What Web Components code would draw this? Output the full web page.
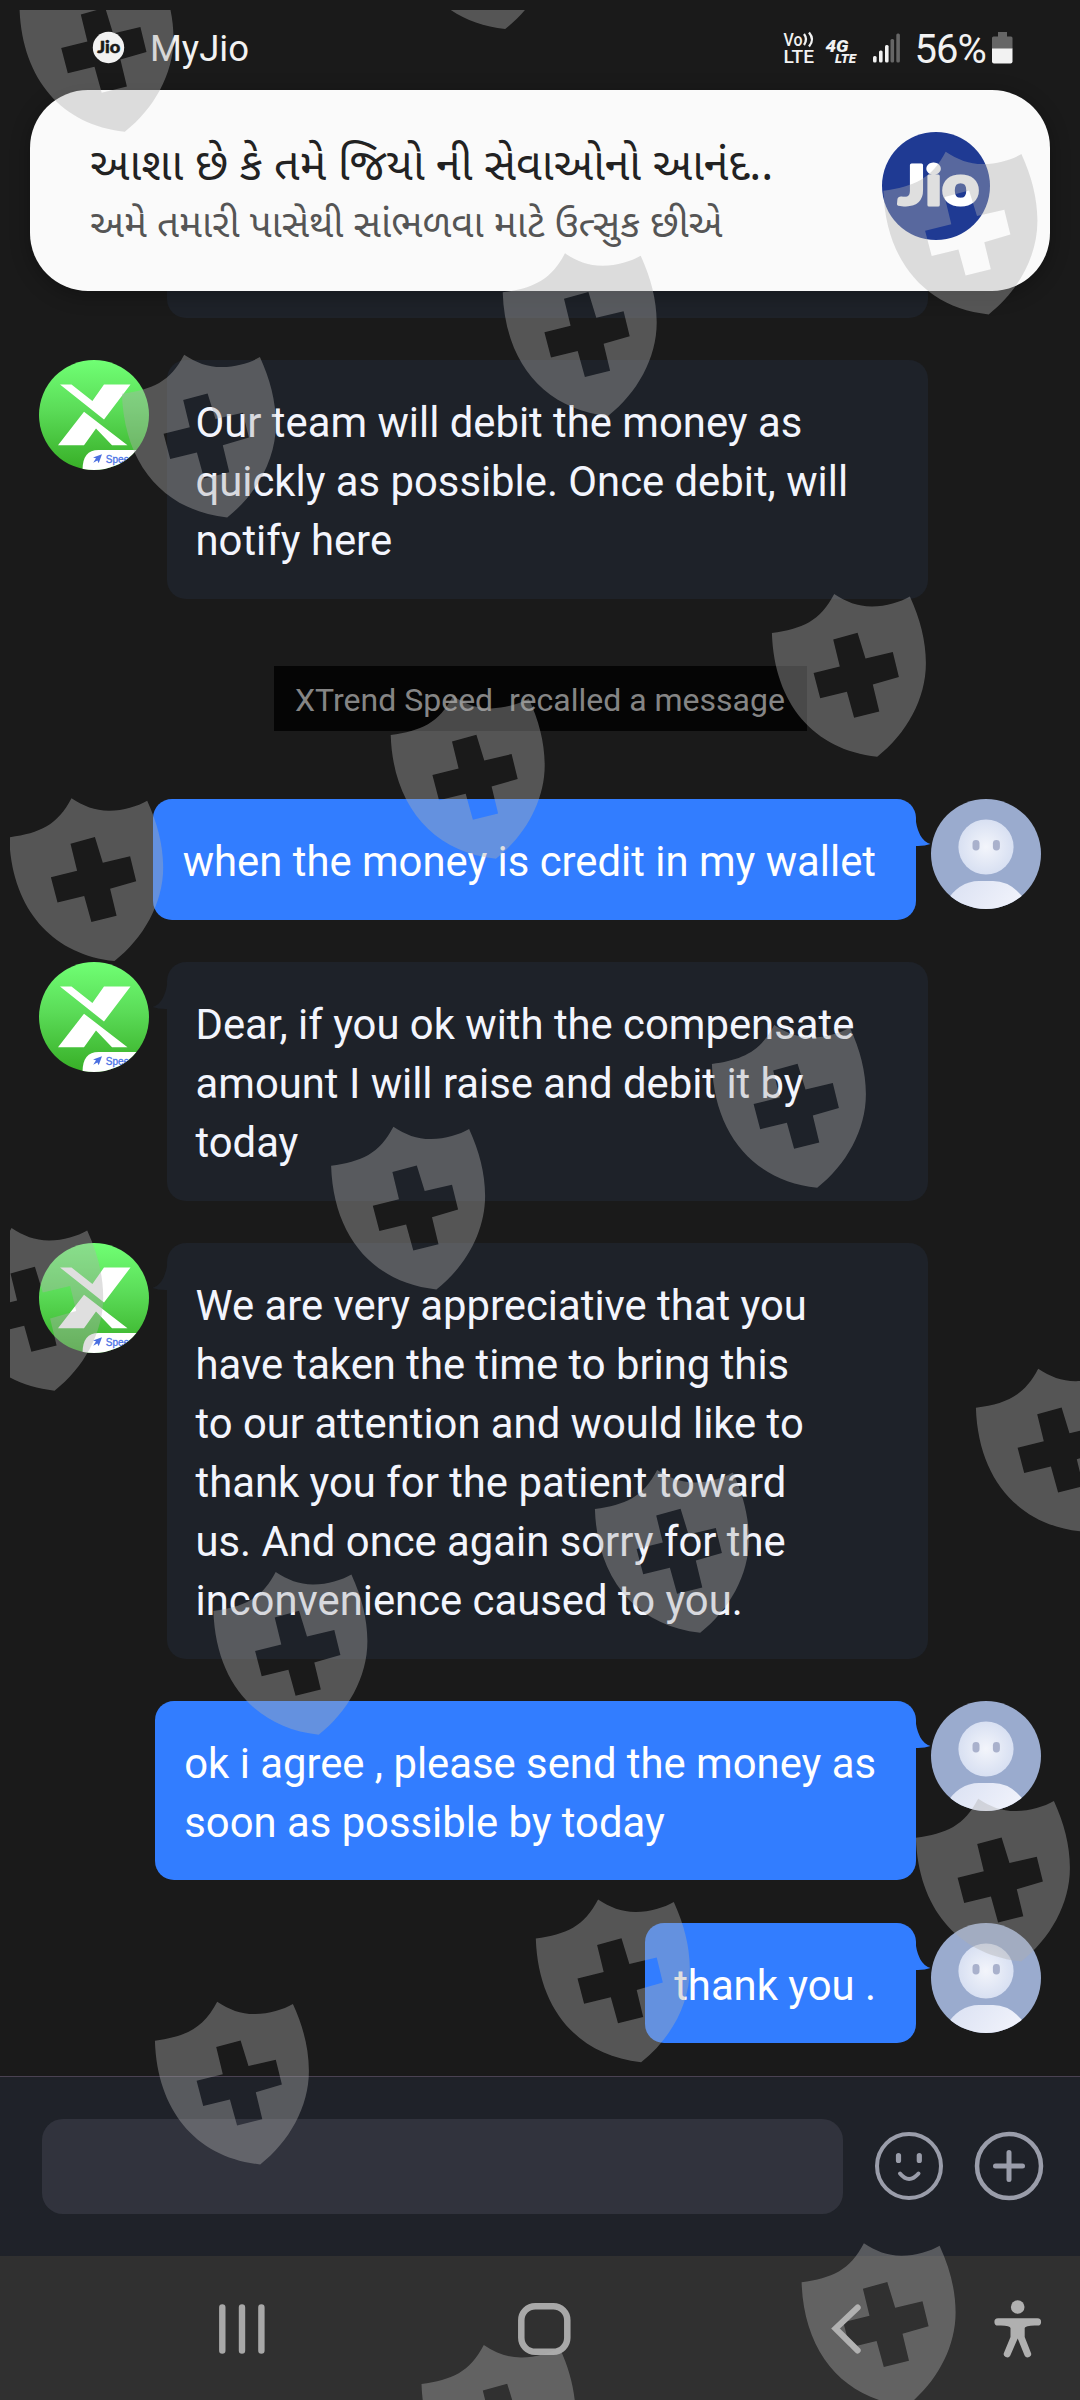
<!DOCTYPE html>
<html lang="en">
<head>
<meta charset="utf-8">
<title>Chat</title>
<style>
  html, body { margin: 0; background: #1a1a1a; }
  body { width: 1080px; height: 2400px; overflow: hidden; font-family: Roboto, "Noto Sans", sans-serif; }
</style>
</head>
<body>
<phone-screen>
  <status-bar slot="top" app="MyJio" battery="56%"></status-bar>
  <push-card slot="top">
    <span slot="title">આશા છે કે તમે જિયો ની સેવાઓનો આનંદ..</span>
    <span slot="body">અમે તમારી પાસેથી સાંભળવા માટે ઉત્સુક છીએ</span>
  </push-card>
  <chat-stub></chat-stub>
  <chat-message from="agent" flat>Our team will debit the money as<br>quickly as possible. Once debit, will<br>notify here</chat-message>
  <chat-notice>XTrend Speed&nbsp; recalled a message</chat-notice>
  <chat-message from="me">when the money is credit in my wallet</chat-message>
  <chat-message from="agent">Dear, if you ok with the compensate<br>amount I will raise and debit it by<br>today</chat-message>
  <chat-message from="agent">We are very appreciative that you<br>have taken the time to bring this<br>to our attention and would like to<br>thank you for the patient toward<br>us. And once again sorry for the<br>inconvenience caused to you.</chat-message>
  <chat-message from="me">ok i agree , please send the money as<br>soon as possible by today</chat-message>
  <chat-message from="me">thank you .</chat-message>
  <chat-composer slot="bottom"></chat-composer>
  <nav-bar slot="bottom"></nav-bar>
  <shield-layer slot="overlay"></shield-layer>
</phone-screen>

<script>
const define = (name, render) => customElements.define(name, class extends HTMLElement {
  connectedCallback() {
    if (this.shadowRoot) return;
    this.attachShadow({ mode: 'open' }).innerHTML = render(this);
  }
});

define('phone-screen', () => `
  <style>
    :host { display: flex; flex-direction: column; position: relative; width: 1080px; height: 2400px; overflow: hidden; background: #1a1a1a; }
    .top { position: relative; z-index: 1; display: flex; flex-direction: column; }
    main { flex: 1; min-height: 0; display: flex; flex-direction: column; gap: 42.4px; }
    footer { display: flex; flex-direction: column; }
  </style>
  <div class="top"><slot name="top"></slot></div>
  <main><slot></slot></main>
  <footer><slot name="bottom"></slot></footer>
  <slot name="overlay"></slot>`);

define('status-bar', el => `
  <style>
    :host { display: flex; align-items: center; justify-content: space-between; height: 90px; box-sizing: border-box; padding: 5px 67px 0 92px; color: #f2f2f2; }
    .side { display: flex; align-items: center; }
    .app { font-size: 36.5px; margin-left: 25px; line-height: 40px; padding-top: 2px; }
    .pct { font-size: 40px; line-height: 40px; margin: 4px 6px 0 12px; letter-spacing: -.9px; }
    svg { display: block; }
  </style>
  <div class="side">
    <svg width="33" height="33" viewBox="0 0 33 33"><circle cx="16.5" cy="16.5" r="15.7" fill="#f2f2f2"/><text x="5.2" y="21.6" textLength="23" lengthAdjust="spacingAndGlyphs" font-family="Lato" font-weight="900" font-size="16" fill="#1a1a1a" stroke="#1a1a1a" stroke-width=".5">Jio</text></svg>
    <span class="app">${el.getAttribute('app')}</span>
  </div>
  <div class="side">
    <svg width="120" height="40" viewBox="782 28 120 40" fill="#f2f2f2">
      <text x="783.5" y="45.5" font-size="17.5" font-weight="500" textLength="19" lengthAdjust="spacingAndGlyphs">Vo</text>
      <path d="M804 34q4 5 0 11M809 32.500q6 7 0 14" fill="none" stroke="#f2f2f2" stroke-width="2.3"/>
      <text x="783.5" y="62.500" font-size="18.5" font-weight="500" textLength="30.500" lengthAdjust="spacingAndGlyphs">LTE</text>
      <text x="825.5" y="51.500" font-size="16.500" font-weight="900" font-style="italic" textLength="23" lengthAdjust="spacingAndGlyphs">4G</text>
      <text x="835" y="62.800" font-size="12" font-weight="900" font-style="italic" textLength="21" lengthAdjust="spacingAndGlyphs">LTE</text>
      <g><rect x="873" y="56" width="3.600" height="6.500" rx="1.500"/><rect x="879" y="50.500" width="3.600" height="12" rx="1.500"/><rect x="885" y="45" width="3.600" height="17.500" rx="1.500"/>
      <g fill="#666"><rect x="890.500" y="39" width="3.600" height="23.500" rx="1.500"/><rect x="896.300" y="33.500" width="3.600" height="29" rx="1.500"/></g></g>
    </svg>
    <span class="pct">${el.getAttribute('battery')}</span>
    <svg width="21" height="32" viewBox="0 0 21 32"><path d="M6 0h9v4.500h4q1.500 0 1.500 1.500v11H0V6q0-1.500 1.500-1.500H6z" fill="#666"/><path d="M0 16.500h20.500V29.500q0 2-2 2H2q-2 0-2-2z" fill="#f2f2f2"/></svg>
  </div>`);

define('push-card', () => `
  <style>
    :host { display: flex; align-items: center; justify-content: space-between; box-sizing: border-box; height: 201px; margin: 0 30px; padding: 0 60px 0 60px; background: #fafafa; border-radius: 58px; box-shadow: 0 4px 20px rgba(0,0,0,.3); font-family: "Noto Sans", "Noto Sans Gujarati", sans-serif; }
    .text { display: flex; flex-direction: column; white-space: nowrap; }
    .title { font-size: 44.7px; line-height: 62px; color: #222; }
    .body { font-size: 38.6px; line-height: 56px; color: #555; }
    svg { display: block; margin-bottom: 9px; }
  </style>
  <div class="text"><div class="title"><slot name="title"></slot></div><div class="body"><slot name="body"></slot></div></div>
  <svg width="108" height="108" viewBox="0 0 108 108"><circle cx="54" cy="54" r="54" fill="#1f3a93"/><text x="16" y="72.500" textLength="81" lengthAdjust="spacingAndGlyphs" font-family="Lato" font-weight="900" font-size="56" fill="#fff" stroke="#fff" stroke-width="3" stroke-linejoin="round">Jio</text></svg>`);

define('chat-stub', () => `
  <style>:host { display: block; height: 26.600px; width: 761px; margin-left: 167px; background: #1e2229; border-radius: 0 0 19px 19px; flex: none; }</style>`);

const agentAvatar = `
  <svg class="avatar" width="110" height="110" viewBox="0 0 110 110">
    <defs><linearGradient id="g" x2="0" y2="1"><stop offset="0" stop-color="#70ff74"/><stop offset=".45" stop-color="#5bdc58"/><stop offset="1" stop-color="#37ae26"/></linearGradient><clipPath id="c"><circle cx="55" cy="55" r="55"/></clipPath></defs>
    <g clip-path="url(#c)"><rect width="110" height="110" fill="url(#g)"/>
      <path d="M21 24.500h11.500L53.400 41 65 24.500h26.500L65 59.500zM45 51.700L88.500 85.300H73L57 68.500 45 85.300H19z" fill="#fff"/>
      <path d="M43.500 110q0-20 16-20H110v20z" fill="#fff"/>
      <path d="M63 94.300L54 97.500l3 .800-2.800 4.500 4.200-2.300 1.300 2.700z" fill="#4a6fe0"/>
      <text x="66.800" y="102.500" font-family="Liberation Sans" font-size="10" fill="#4c74e6" stroke="#4c74e6" stroke-width=".3">Speed</text></g>
  </svg>`;
const userAvatar = `
  <svg class="avatar" width="110" height="110" viewBox="0 0 110 110">
    <defs><radialGradient id="h"><stop offset="0" stop-color="#f3f5fb"/><stop offset="1" stop-color="#d8e0f2"/></radialGradient><linearGradient id="b" x2="1" y2=".3"><stop offset="0" stop-color="#d9e0f2"/><stop offset="1" stop-color="#f0f2fb"/></linearGradient><clipPath id="c"><circle cx="55" cy="55" r="55"/></clipPath></defs>
    <g clip-path="url(#c)"><rect width="110" height="110" fill="#9aabce"/>
      <circle cx="55" cy="48" r="27.600" fill="url(#h)"/>
      <rect x="41.500" y="41" width="7" height="10.500" rx="3.400" fill="#a9b1cc"/><rect x="61.900" y="41" width="7" height="10.500" rx="3.400" fill="#a9b1cc"/>
      <path d="M14 104Q28 82 48 82h14q20 0 34 22v8H14z" fill="url(#b)"/></g>
  </svg>`;

define('chat-message', el => {
  const me = el.getAttribute('from') === 'me';
  const tail = el.hasAttribute('flat') ? '' : `<svg class="tail" width="16" height="34" viewBox="0 0 16 34"><path d="M0 0Q2 26 15.500 30Q9 32.500 0 32z" fill="${me ? '#327dff' : '#1e2229'}"/></svg>`;
  return `
  <style>
    :host { display: flex; flex: none; flex-direction: ${me ? 'row-reverse' : 'row'}; align-items: flex-start; padding: 0 39px; gap: ${me ? 15 : 18}px; }
    .bubble { position: relative; box-sizing: border-box; ${me ? '' : 'width: 761px;'} padding: 33px ${me ? 40 : 29}px 28.600px ${me ? 29.5 : 28.5}px; border-radius: 19px; background: ${me ? '#327dff' : '#1e2229'}; color: ${me ? '#fff' : '#f3f5fd'}; font-size: 41.8px; line-height: 59px; white-space: nowrap; }
    .tail { position: absolute; top: 15px; ${me ? 'left: calc(100% - 1px);' : 'right: calc(100% - 1px); transform: scaleX(-1);'} }
    .avatar { display: block; flex: none; }
  </style>
  ${me ? userAvatar : agentAvatar}
  <div class="bubble">${tail}<slot></slot></div>`;
});

define('chat-notice', () => `
  <style>:host { display: block; flex: none; align-self: center; box-sizing: border-box; width: 533px; height: 65px; margin: 24.700px 0 25.900px; line-height: 69px; text-align: center; font-size: 32px; white-space: nowrap; background: #050505; color: #858585; }</style>
  <slot></slot>`);

define('chat-composer', () => `
  <style>
    :host { display: flex; align-items: center; box-sizing: border-box; height: 180px; border-top: 1px solid #4a4252; background: #1f2229; padding: 0 36px 1px 42px; }
    .field { flex: 1; height: 95px; border-radius: 21px; background: #31333d; margin-right: 31px; }
    svg { display: block; } svg + svg { margin-left: 30px; }
  </style>
  <div class="field"></div>
  <svg width="70" height="70" viewBox="0 0 70 70" fill="none" stroke="#9a9daa" stroke-width="4" stroke-linecap="round"><circle cx="35" cy="35" r="32"/><path d="M24.500 24.500v5M45.300 24.500v5" stroke-width="5.200"/><path d="M26 42.500q9 11 18.500 0" stroke-width="4"/></svg>
  <svg width="70" height="70" viewBox="0 0 70 70" fill="none" stroke="#9a9daa" stroke-width="4.500" stroke-linecap="round"><circle cx="35" cy="35" r="32"/><path d="M35 21.500v27M21.500 35h27" stroke-width="5"/></svg>`);

define('nav-bar', () => `
  <style>
    :host { display: flex; align-items: center; box-sizing: border-box; height: 144px; padding: 2px 37px 0 218px; background: #303030; }
    svg { display: block; flex: none; }
    .recents { margin-right: 250px; } .home { margin-right: 258px; } .back { margin-right: auto; }
  </style>
  <svg class="recents" width="48" height="56" viewBox="218 2301 48 56" stroke="#a8a8a8" stroke-width="6.400" stroke-linecap="round"><path d="M222.300 2307.500v43M242 2307.500v43M261.400 2307.500v43"/></svg>
  <svg class="home" width="56" height="56" viewBox="516 2301 56 56" fill="none" stroke="#a8a8a8" stroke-width="6.500"><rect x="521.300" y="2306.200" width="46" height="45.600" rx="14"/></svg>
  <svg class="back" width="34" height="56" viewBox="830 2301 34 56" fill="none" stroke="#b2b2b2" stroke-width="6" stroke-linecap="round"><path d="M857.700 2307.500L835.500 2328.500 857.700 2350.500"/></svg>
  <svg width="50" height="62" viewBox="993 2299 50 62" fill="#b0b0b0"><circle cx="1017.700" cy="2308" r="6.800"/><path d="M998 2319.300h39.500a3.600 3.600 0 0 1 0 7.200q-12-.400-12.800 2.500v9L1030.800 2353.500a3.300 3.300 0 0 1-6.200 3L1017.700 2339.500 1010.300 2356.500a3.300 3.300 0 0 1-6.200-3L1010.500 2338v-9q-.400-2.900-12.500-2.500a3.600 3.600 0 0 1 0-7.200z"/></svg>`);

define('shield-layer', () => {
  const shape = 'M0 0C12 8 24 12.6 38 12.4C52 12.2 66 8 75.700 2.400C86 25 91.500 46 91.700 69C91.800 105 72 140 43 162.700C-20 156-60 110-62.300 39C-32 35-14 27 0 0ZM-1 45.400L5.600 72.500-20.600 79-14 104.300 12.700 97.700 19.900 123.700 45.100 117.500 38.600 90.500 64.700 82.900 58.600 58 31.300 64.400 23.400 38.700Z';
  const pins = [[82.6,-31],[463,-133.7],[946.5,151.7],[565.8,253.3],[185,354.7],[835,594],[453.8,696],[72.3,798.3],[775,1025],[394.2,1126.7],[12.3,1228],[1039,1368.8],[658,1470],[276.5,1572],[979,1798.7],[598.9,1899.5],[218,2001.7],[864.7,2243.3],[484.6,2345]];
  return `
  <style>:host { display: block; position: absolute; inset: 10px 0 0 10px; z-index: 2; pointer-events: none; } svg { display: block; }</style>
  <svg width="1070" height="2390" viewBox="10 10 1070 2390" fill="#afafaf" fill-opacity=".4" fill-rule="evenodd">${pins.map(([x, y]) => `<path transform="translate(${x - .8} ${y})" d="${shape}"/>`).join('')}</svg>`;
});
</script>
</body>
</html>
